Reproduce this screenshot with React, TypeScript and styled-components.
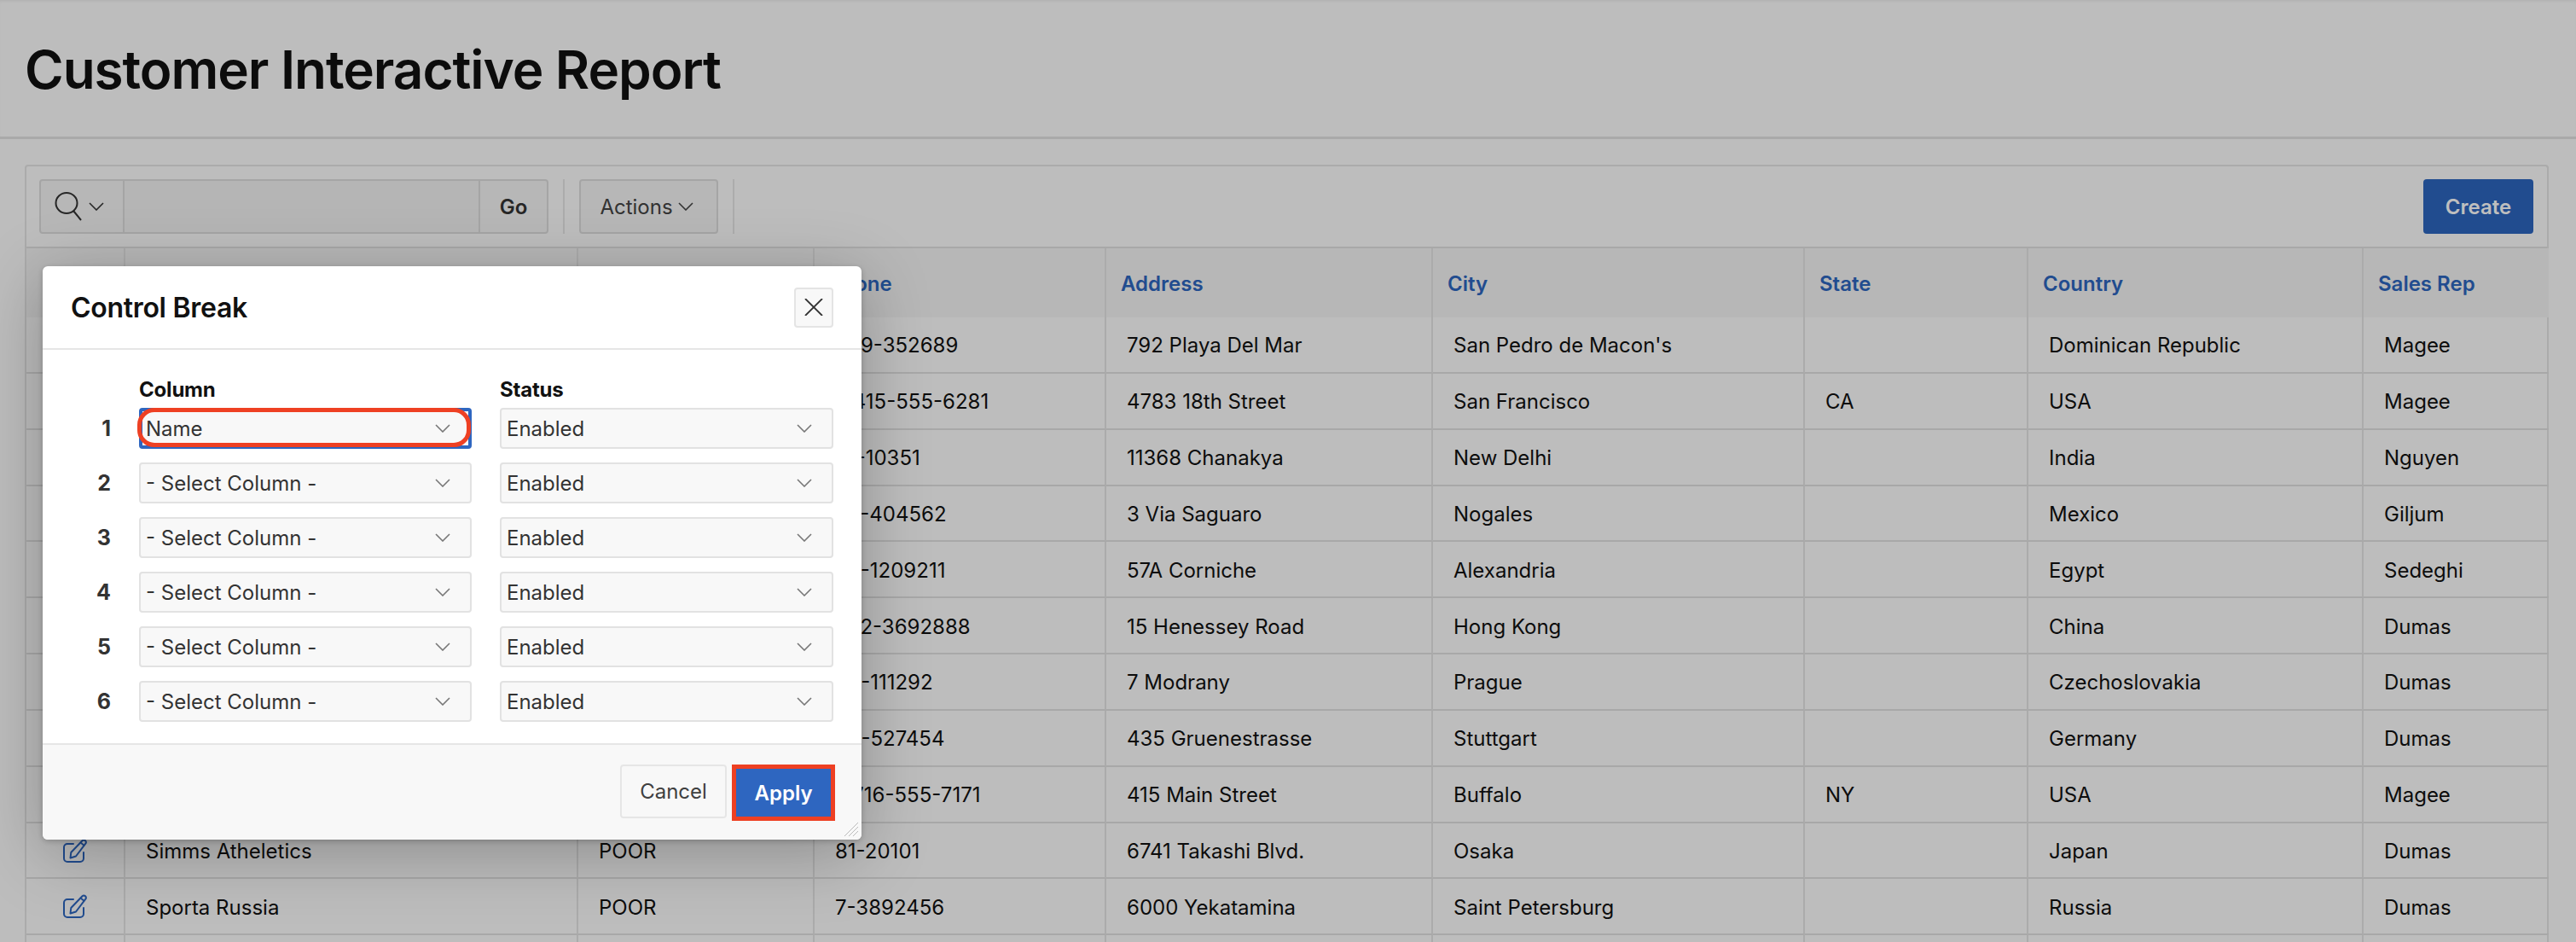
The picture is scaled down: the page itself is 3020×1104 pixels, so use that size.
import React from "react";
import styled, { createGlobalStyle } from "styled-components";

const Global = createGlobalStyle`
  html, body { margin: 0; padding: 0; background: #fcfcfc; }
  body { width: 3020px; height: 1104px; overflow: hidden; font-family: Inter, "Liberation Sans", sans-serif; color: #111; }
  * { box-sizing: border-box; }
`;

const Page = styled.div`
  position: relative;
  width: 3020px;
  height: 1104px;
  overflow: hidden;
  background: #fcfcfc;
`;
const TitleBar = styled.header`
  height: 163px;
  border-bottom: 3px solid #e2e2e2;
  padding: 3px 29px 0;
  display: flex;
  align-items: center;
  box-shadow: inset 0 3px 3px -1px rgba(0, 0, 0, 0.05);
`;
const Title = styled.h1`
  margin: 0;
  font-size: 62px;
  line-height: 1;
  font-weight: 600;
  letter-spacing: -1.05px;
  color: #111;
`;
const Region = styled.section`
  margin: 30px 32px 0 29px;
  border: 2px solid #e4e4e4;
  border-bottom: none;
  border-radius: 4px 4px 0 0;
  background: #fcfcfc;
`;
const Toolbar = styled.div`
  height: 96px;
  padding: 15px 16px 15px 15px;
  display: flex;
  align-items: stretch;
  border-bottom: 2px solid #e0e0e0;
`;
const SearchGroup = styled.div`
  width: 597px;
  display: flex;
  border: 2px solid #dcdcdc;
  border-radius: 4px;
  background: #f4f4f4;
`;
const SearchMenu = styled.div`
  width: 98px;
  display: flex;
  align-items: center;
  padding-left: 16px;
  gap: 6px;
  border-right: 2px solid #dcdcdc;
`;
const SearchInput = styled.div`
  flex: 1;
  background: #f2f2f2;
`;
const GoButton = styled.div`
  width: 80px;
  display: flex;
  align-items: center;
  justify-content: center;
  border-left: 2px solid #dcdcdc;
  font-size: 24px;
  font-weight: 600;
  color: #333;
`;
const Separator = styled.div`
  width: 2px;
  background: #e6e6e6;
  margin: 0 17px;
`;
const ActionsButton = styled.div`
  width: 163px;
  display: flex;
  align-items: center;
  justify-content: center;
  gap: 6px;
  padding-right: 5px;
  border: 2px solid #dcdcdc;
  border-radius: 4px;
  background: #f4f4f4;
  font-size: 24px;
  color: #444;
`;
const Spacer = styled.div`
  flex: 1;
`;
const CreateButton = styled.div`
  width: 129px;
  display: flex;
  align-items: center;
  justify-content: center;
  border-radius: 4px;
  background: #2d66bf;
  color: #fff;
  font-size: 24px;
  font-weight: 600;
`;
const Table = styled.table`
  width: 100%;
  table-layout: fixed;
  border-collapse: separate;
  border-spacing: 0;
  font-size: 24px;
`;
const Th = styled.th`
  height: 81px;
  padding: 2px 0 0 17px;
  text-align: left;
  font-weight: 600;
  color: #2d66bf;
  background: #f4f4f4;
  border-right: 2px solid #e4e4e4;
  &:last-child { border-right: none; }
`;
const Td = styled.td`
  height: 65.85px;
  padding: 2px 0 0 24px;
  color: #111;
  white-space: nowrap;
  border-right: 2px solid #e4e4e4;
  border-bottom: 2px solid #e0e0e0;
  &:last-child { border-right: none; }
`;
const EditCell = styled(Td)`
  padding: 0;
  text-align: center;
  svg { display: block; margin: 0 auto; color: #2d66bf; }
`;
const Overlay = styled.div`
  position: absolute;
  inset: 0;
  background: rgba(0, 0, 0, 0.25);
`;
const Dialog = styled.div`
  position: absolute;
  left: 50px;
  top: 312px;
  width: 960px;
  height: 672px;
  display: flex;
  flex-direction: column;
  background: #fff;
  border-radius: 6px;
  box-shadow: 0 16px 80px rgba(0, 0, 0, 0.26), 0 2px 6px rgba(0, 0, 0, 0.2);
`;
const DialogHead = styled.div`
  height: 98px;
  flex: none;
  padding: 0 33px;
  display: flex;
  align-items: center;
  justify-content: space-between;
  border-bottom: 2px solid #e6e6e6;
`;
const DialogTitle = styled.h2`
  margin: 0;
  font-size: 32px;
  font-weight: 600;
  letter-spacing: -0.3px;
  color: #111;
`;
const CloseButton = styled.div`
  width: 46px;
  height: 47px;
  display: flex;
  align-items: center;
  justify-content: center;
  background: #f8f8f8;
  border: 2px solid #e4e4e4;
  border-radius: 4px;
  color: #333;
`;
const FormBody = styled.div`
  flex: 1;
  padding: 34px 33px 0 0;
`;
const FormRow = styled.div<{ $head?: boolean }>`
  display: grid;
  grid-template-columns: 113px 390px 424px;
  height: ${(p) => (p.$head ? "26px" : "48px")};
  margin-bottom: ${(p) => (p.$head ? "8px" : "16px")};
`;
const HeadLabel = styled.div<{ $second?: boolean }>`
  font-size: 24px;
  line-height: 26px;
  font-weight: 700;
  letter-spacing: -0.2px;
  color: #111;
  margin-left: ${(p) => (p.$second ? "33px" : "0")};
`;
const RowNum = styled.div`
  display: flex;
  align-items: center;
  justify-content: flex-end;
  padding-right: 33px;
  font-size: 25px;
  font-weight: 700;
  color: #333;
`;
const Select = styled.div<{ $second?: boolean; $focused?: boolean }>`
  position: relative;
  display: flex;
  align-items: center;
  justify-content: space-between;
  margin-left: ${(p) => (p.$second ? "33px" : "0")};
  padding: 0 ${(p) => (p.$focused ? "21px" : "23px")} 0 ${(p) => (p.$focused ? "4px" : "6px")};
  background: #f8f8f8;
  border: ${(p) => (p.$focused ? "4px solid #2e66c0" : "2px solid #e2e2e2")};
  border-radius: 4px;
  font-size: 24px;
  color: #333;
`;
const RedRing = styled.div`
  position: absolute;
  left: -6px;
  right: -3px;
  top: -4px;
  bottom: -2px;
  border: 5px solid #ee4023;
  border-radius: 20px;
  pointer-events: none;
`;
const DialogFoot = styled.div`
  height: 113px;
  flex: none;
  display: flex;
  justify-content: flex-end;
  align-items: flex-start;
  gap: 6px;
  padding: 23px 31px 0 0;
  background: #f8f8f8;
  border-top: 2px solid #e6e6e6;
  border-radius: 0 0 6px 6px;
  position: relative;
`;
const CancelButton = styled.div`
  width: 125px;
  height: 63px;
  display: flex;
  align-items: center;
  justify-content: center;
  background: #f8f8f8;
  border: 2px solid #e6e6e6;
  border-radius: 4px;
  font-size: 24px;
  color: #404040;
`;
const ApplyButton = styled.div`
  width: 121px;
  height: 66px;
  display: flex;
  align-items: center;
  justify-content: center;
  background: #2e66c0;
  border: 5px solid #ee4023;
  font-size: 24px;
  font-weight: 600;
  color: #fff;
`;
const Grip = styled.svg`
  position: absolute;
  right: 4px;
  bottom: 4px;
`;

const Chevron = ({ color = "#777" }: { color?: string }) => (
  <svg width="18" height="10" viewBox="0 0 18 10" fill="none" stroke={color} strokeWidth="1.6">
    <path d="M1 1l8 8 8-8" />
  </svg>
);
const SearchIcon = () => (
  <svg width="34" height="34" viewBox="0 0 34 34" fill="none" stroke="#333" strokeWidth="2">
    <ellipse cx="14" cy="13" rx="12.5" ry="12" />
    <path d="M22 22l9 11" />
  </svg>
);
const EditIcon = () => (
  <svg width="28" height="28" viewBox="0 0 28 28" fill="none" stroke="currentColor" strokeWidth="2" strokeLinecap="round" strokeLinejoin="round">
    <path d="M12 6H5a4 4 0 0 0-4 4v13a4 4 0 0 0 4 4h15a4 4 0 0 0 4-4v-7" />
    <path d="M22.5 2.2a2.6 2.6 0 0 1 4 3.2L15 20.5l-6.5 2 .8-6.5z" />
    <path d="M20.5 4.5l4 3.2" />
  </svg>
);

type Row = [string, string, string, string, string, string, string, string];
const rows: Row[] = [
  ["", "", "809-352689", "792 Playa Del Mar", "San Pedro de Macon's", "", "Dominican Republic", "Magee"],
  ["", "", "1-415-555-6281", "4783 18th Street", "San Francisco", "CA", "USA", "Magee"],
  ["", "", "91-10351", "11368 Chanakya", "New Delhi", "", "India", "Nguyen"],
  ["", "", "52-404562", "3 Via Saguaro", "Nogales", "", "Mexico", "Giljum"],
  ["", "", "20-1209211", "57A Corniche", "Alexandria", "", "Egypt", "Sedeghi"],
  ["", "", "852-3692888", "15 Henessey Road", "Hong Kong", "", "China", "Dumas"],
  ["", "", "42-111292", "7 Modrany", "Prague", "", "Czechoslovakia", "Dumas"],
  ["", "", "49-527454", "435 Gruenestrasse", "Stuttgart", "", "Germany", "Dumas"],
  ["", "", "1-716-555-7171", "415 Main Street", "Buffalo", "NY", "USA", "Magee"],
  ["Simms Atheletics", "POOR", "81-20101", "6741 Takashi Blvd.", "Osaka", "", "Japan", "Dumas"],
  ["Sporta Russia", "POOR", "7-3892456", "6000 Yekatamina", "Saint Petersburg", "", "Russia", "Dumas"],
  ["", "", "", "", "", "", "", ""],
];
const widths = [116, 531, 277, 342, 383, 436, 262, 393, 217];
const heads = ["", "", "", "Phone", "Address", "City", "State", "Country", "Sales Rep"];

export default function App() {
  return (
    <Page>
      <Global />
      <TitleBar>
        <Title>Customer Interactive Report</Title>
      </TitleBar>
      <Region>
        <Toolbar>
          <SearchGroup>
            <SearchMenu>
              <SearchIcon />
              <Chevron color="#333" />
            </SearchMenu>
            <SearchInput />
            <GoButton>Go</GoButton>
          </SearchGroup>
          <Separator />
          <ActionsButton>
            Actions
            <Chevron color="#444" />
          </ActionsButton>
          <Separator />
          <Spacer />
          <CreateButton>Create</CreateButton>
        </Toolbar>
        <Table>
          <colgroup>
            {widths.map((w, i) => (
              <col key={i} style={{ width: w }} />
            ))}
          </colgroup>
          <thead>
            <tr>
              {heads.map((h, i) => (
                <Th key={i}>{h}</Th>
              ))}
            </tr>
          </thead>
          <tbody>
            {rows.map((r, i) => (
              <tr key={i}>
                <EditCell>{i < 11 && <EditIcon />}</EditCell>
                {r.map((c, j) => (
                  <Td key={j}>{c}</Td>
                ))}
              </tr>
            ))}
          </tbody>
        </Table>
      </Region>
      <Overlay />
      <Dialog>
        <DialogHead>
          <DialogTitle>Control Break</DialogTitle>
          <CloseButton>
            <svg width="22" height="20" viewBox="0 0 22 20" fill="none" stroke="#333" strokeWidth="1.8">
              <path d="M1 0l20 20M21 0L1 20" />
            </svg>
          </CloseButton>
        </DialogHead>
        <FormBody>
          <FormRow $head>
            <div />
            <HeadLabel>Column</HeadLabel>
            <HeadLabel $second>Status</HeadLabel>
          </FormRow>
          {[1, 2, 3, 4, 5, 6].map((n) => (
            <FormRow key={n}>
              <RowNum>{n}</RowNum>
              <Select $focused={n === 1}>
                {n === 1 ? "Name" : "- Select Column -"}
                <Chevron />
                {n === 1 && <RedRing />}
              </Select>
              <Select $second>
                Enabled
                <Chevron />
              </Select>
            </FormRow>
          ))}
        </FormBody>
        <DialogFoot>
          <CancelButton>Cancel</CancelButton>
          <ApplyButton>Apply</ApplyButton>
          <Grip width="16" height="16" viewBox="0 0 16 16" fill="none" stroke="#bbb" strokeWidth="1">
            <path d="M0 16L16 0M5 16L16 5M10 16l6-6" />
          </Grip>
        </DialogFoot>
      </Dialog>
    </Page>
  );
}
